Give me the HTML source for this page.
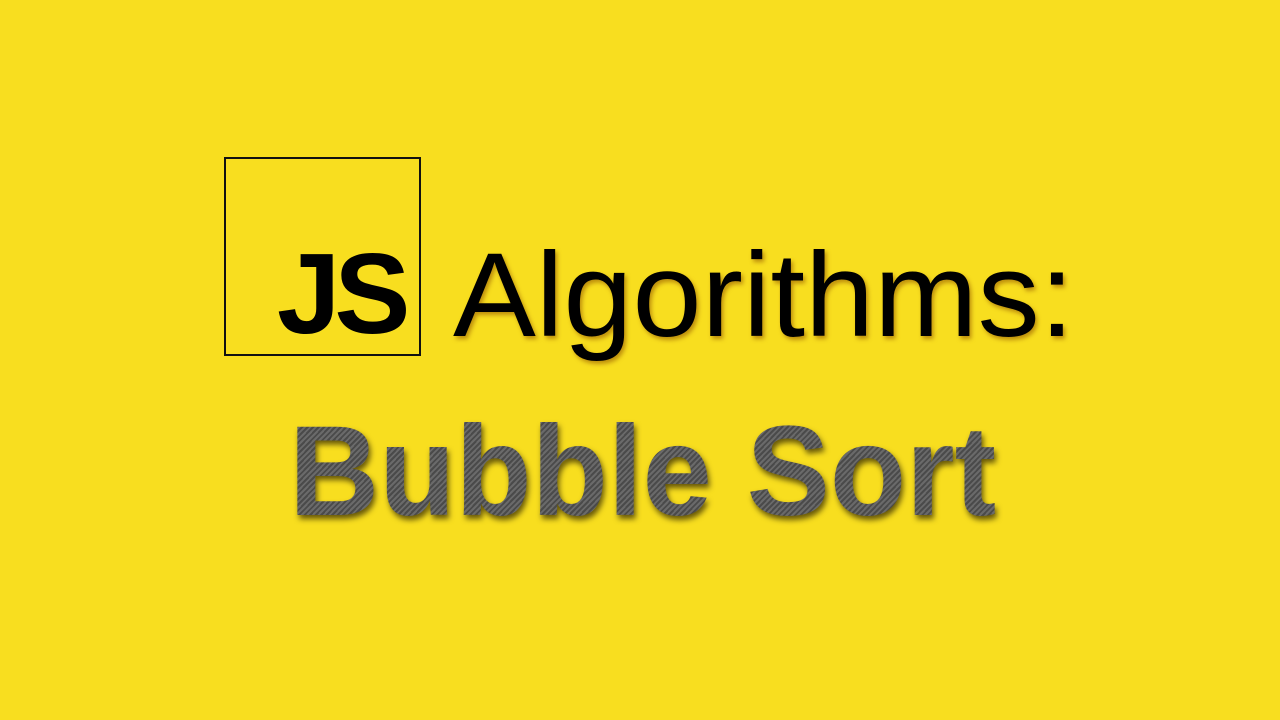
<!DOCTYPE html>
<html><head><meta charset="utf-8"><style>
html,body{margin:0;padding:0;width:1280px;height:720px;overflow:hidden;background:#F8DE1F;font-family:"Liberation Sans",sans-serif;}
.box{position:absolute;left:224px;top:157px;width:193px;height:195px;border:2px solid #111;}
.t{position:absolute;white-space:nowrap;line-height:1;}
.js{left:277px;top:238px;font-size:114px;font-weight:bold;color:#000;letter-spacing:-6px;}
.alg{left:453px;top:235px;font-size:120px;color:#000;text-shadow:2px 3px 4px rgba(150,90,0,.6);transform-origin:0 0;transform:scaleX(1.035);}
.bs{left:289px;top:408px;font-size:128px;font-weight:bold;transform-origin:0 0;transform:scaleX(0.975);
background:repeating-linear-gradient(135deg,#6a6a6a 0 2px,#4a4a4a 2px 4px);-webkit-background-clip:text;background-clip:text;color:transparent;
filter:drop-shadow(2px 4px 3px rgba(40,30,0,.7));}
</style></head><body>
<div class="box"></div>
<div class="t js">JS</div>
<div class="t alg">Algorithms:</div>
<div class="t bs">Bubble Sort</div>
</body></html>
